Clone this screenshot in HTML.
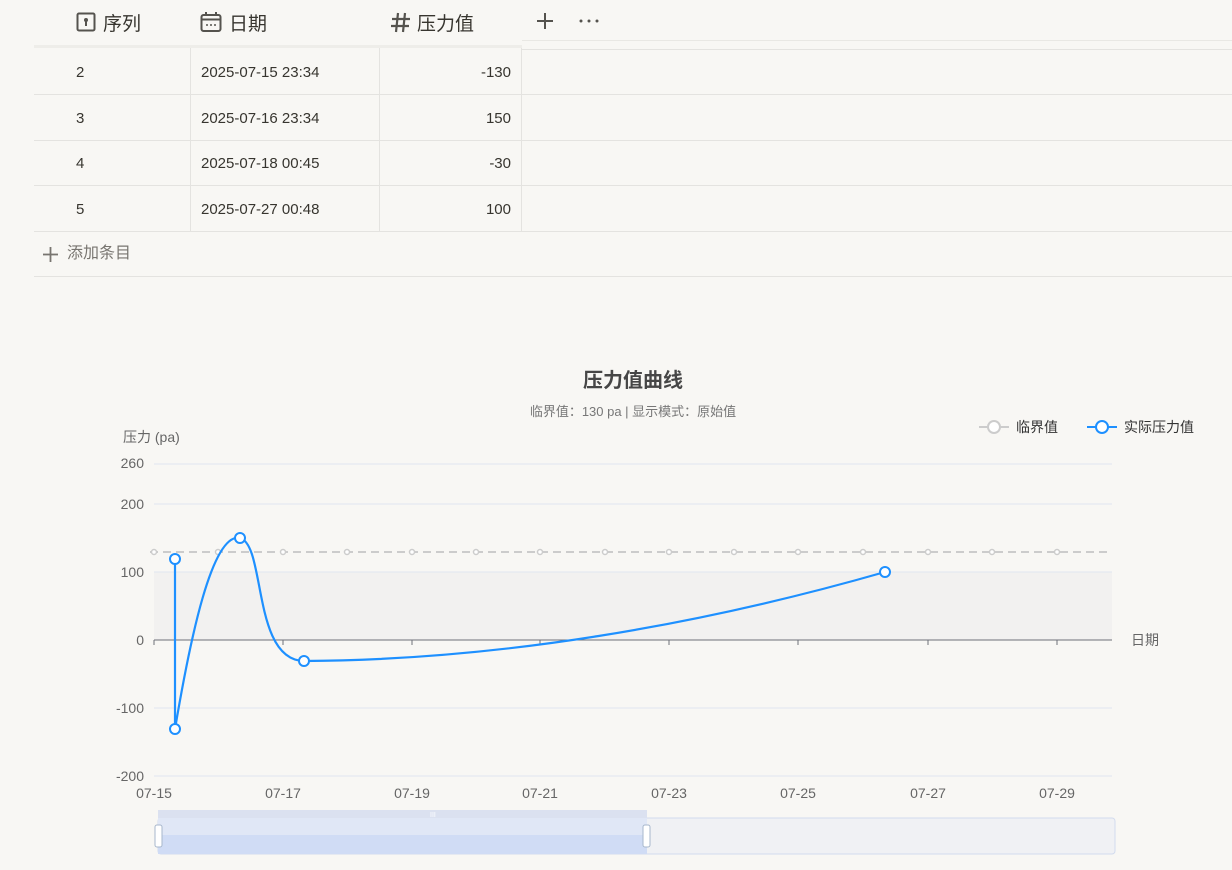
<!DOCTYPE html>
<html><head><meta charset="utf-8"><style>
body{margin:0;width:1232px;height:870px;background:#f8f7f4;font-family:"Liberation Sans","Noto Sans CJK SC",sans-serif;overflow:hidden;position:relative;color:#37352f}
.hd{position:absolute;top:0;height:44px;font-size:19px;display:flex;align-items:center}
.row{position:absolute;left:34px;width:1198px;height:45px;border-bottom:1px solid #e4e3e0;font-size:15px}
.c{position:absolute;top:1px;height:45px;line-height:45px}
.r{position:absolute;top:1px;height:45px;line-height:45px;right:721px}
.vl{position:absolute;top:48px;height:183px;width:1px;background:#e4e3e0}
</style></head><body>
<div class="hd" style="left:76px;top:0"><svg width="20" height="20" viewBox="0 0 20 20"><rect x="1.5" y="1.5" width="17" height="17" rx="1.5" fill="none" stroke="#55534e" stroke-width="2"/><circle cx="10" cy="8" r="2" fill="#55534e"/><rect x="9" y="8" width="2" height="6" fill="#55534e"/></svg><span style="margin-left:7px">序列</span></div>
<div class="hd" style="left:200px"><svg width="22" height="20" viewBox="0 0 22 20"><rect x="1.5" y="3" width="19" height="16" rx="2" fill="none" stroke="#55534e" stroke-width="2"/><line x1="1.5" y1="7.5" x2="20.5" y2="7.5" stroke="#55534e" stroke-width="2"/><line x1="6" y1="0" x2="6" y2="4" stroke="#55534e" stroke-width="2"/><line x1="16" y1="0" x2="16" y2="4" stroke="#55534e" stroke-width="2"/><circle cx="7" cy="13" r="1" fill="#55534e"/><circle cx="11" cy="13" r="1" fill="#55534e"/><circle cx="15" cy="13" r="1" fill="#55534e"/></svg><span style="margin-left:7px">日期</span></div>
<div class="hd" style="left:390px"><svg width="22" height="22" viewBox="0 0 22 22"><g stroke="#55534e" stroke-width="2.2"><line x1="8" y1="2" x2="6" y2="21"/><line x1="15" y1="2" x2="13" y2="21"/><line x1="2" y1="8" x2="20" y2="8"/><line x1="1" y1="15" x2="19" y2="15"/></g></svg><span style="margin-left:5px">压力值</span></div>
<svg style="position:absolute;left:536px;top:12px" width="18" height="18"><g stroke="#55534e" stroke-width="2"><line x1="9" y1="1" x2="9" y2="17"/><line x1="1" y1="9" x2="17" y2="9"/></g></svg>
<svg style="position:absolute;left:578px;top:18px" width="22" height="6"><g fill="#55534e"><circle cx="3" cy="3" r="1.5"/><circle cx="11" cy="3" r="1.5"/><circle cx="19" cy="3" r="1.5"/></g></svg>
<div style="position:absolute;left:34px;top:45px;width:488px;height:3px;background:#eeede9"></div>
<div style="position:absolute;left:522px;top:40px;width:710px;height:8px;border-top:1px solid #e9e8e4;border-bottom:1px solid #e4e3e0"></div>
<div class="vl" style="left:190px"></div><div class="vl" style="left:379px"></div><div class="vl" style="left:521px"></div>
<div class="row" style="top:49px"><div class="c" style="left:42px">2</div><div class="c" style="left:167px">2025-07-15 23:34</div><div class="r">-130</div></div>
<div class="row" style="top:95px"><div class="c" style="left:42px">3</div><div class="c" style="left:167px">2025-07-16 23:34</div><div class="r">150</div></div>
<div class="row" style="top:140px"><div class="c" style="left:42px">4</div><div class="c" style="left:167px">2025-07-18 00:45</div><div class="r">-30</div></div>
<div class="row" style="top:186px"><div class="c" style="left:42px">5</div><div class="c" style="left:167px">2025-07-27 00:48</div><div class="r">100</div></div>
<div class="row" style="top:232px;height:44px;color:#787570;font-size:16px"><svg style="position:absolute;left:9px;top:15px" width="15" height="15"><g stroke="#787570" stroke-width="1.8"><line x1="7.5" y1="0" x2="7.5" y2="15"/><line x1="0" y1="7.5" x2="15" y2="7.5"/></g></svg><div class="c" style="left:33px;line-height:44px;top:0">添加条目</div></div>
<svg style="position:absolute;left:0;top:0" width="1232" height="870" font-family="Liberation Sans, Noto Sans CJK SC, sans-serif">
<text x="633" y="387" text-anchor="middle" font-size="20" font-weight="bold" fill="#464646">压力值曲线</text>
<text x="633" y="416" text-anchor="middle" font-size="13" fill="#777">临界值：130 pa | 显示模式：原始值</text>
<line x1="979" y1="427" x2="1009" y2="427" stroke="#ccc" stroke-width="2"/><circle cx="994" cy="427" r="6" fill="#fff" stroke="#ccc" stroke-width="2"/>
<text x="1016" y="432" font-size="14" fill="#333">临界值</text>
<line x1="1087" y1="427" x2="1117" y2="427" stroke="#1e90ff" stroke-width="2"/><circle cx="1102" cy="427" r="6" fill="#fff" stroke="#1e90ff" stroke-width="2"/>
<text x="1124" y="432" font-size="14" fill="#333">实际压力值</text>
<text x="123" y="442" font-size="14" fill="#666">压力 (pa)</text>
<rect x="154" y="572" width="958" height="68" fill="#f2f1f0"/>
<g stroke="#e0e6f1" stroke-width="1"><line x1="154" y1="464" x2="1112" y2="464"/><line x1="154" y1="504" x2="1112" y2="504"/><line x1="154" y1="572" x2="1112" y2="572"/><line x1="154" y1="708" x2="1112" y2="708"/><line x1="154" y1="776" x2="1112" y2="776"/></g>
<g font-size="14" fill="#666" text-anchor="end"><text x="144" y="468">260</text><text x="144" y="509">200</text><text x="144" y="577">100</text><text x="144" y="645">0</text><text x="144" y="713">-100</text><text x="144" y="781">-200</text></g>
<line x1="154" y1="640" x2="1112" y2="640" stroke="#6e7079" stroke-width="1"/>
<g stroke="#6e7079"><line x1="154" y1="640" x2="154" y2="645"/><line x1="283" y1="640" x2="283" y2="645"/><line x1="412" y1="640" x2="412" y2="645"/><line x1="540" y1="640" x2="540" y2="645"/><line x1="669" y1="640" x2="669" y2="645"/><line x1="798" y1="640" x2="798" y2="645"/><line x1="928" y1="640" x2="928" y2="645"/><line x1="1057" y1="640" x2="1057" y2="645"/></g>
<text x="1131" y="645" font-size="14" fill="#666">日期</text>
<g font-size="14" fill="#666" text-anchor="middle"><text x="154" y="798">07-15</text><text x="283" y="798">07-17</text><text x="412" y="798">07-19</text><text x="540" y="798">07-21</text><text x="669" y="798">07-23</text><text x="798" y="798">07-25</text><text x="928" y="798">07-27</text><text x="1057" y="798">07-29</text></g>
<line x1="150" y1="552" x2="1112" y2="552" stroke="#ccc" stroke-width="2" stroke-dasharray="8,5"/>
<g fill="#fff" stroke="#ccc" stroke-width="1.5"><circle cx="154" cy="552" r="2.5"/><circle cx="218" cy="552" r="2.5"/><circle cx="283" cy="552" r="2.5"/><circle cx="347" cy="552" r="2.5"/><circle cx="412" cy="552" r="2.5"/><circle cx="476" cy="552" r="2.5"/><circle cx="540" cy="552" r="2.5"/><circle cx="605" cy="552" r="2.5"/><circle cx="669" cy="552" r="2.5"/><circle cx="734" cy="552" r="2.5"/><circle cx="798" cy="552" r="2.5"/><circle cx="863" cy="552" r="2.5"/><circle cx="928" cy="552" r="2.5"/><circle cx="992" cy="552" r="2.5"/><circle cx="1057" cy="552" r="2.5"/></g>
<path d="M175 559 L175 729 C190 640 212 532 240 538 C266 545 252 660 304 661 C500 660 700 625 885 572" fill="none" stroke="#1e90ff" stroke-width="2.2"/>
<g fill="#fff" stroke="#1e90ff" stroke-width="2"><circle cx="175" cy="559" r="5"/><circle cx="175" cy="729" r="5"/><circle cx="240" cy="538" r="5"/><circle cx="304" cy="661" r="5"/><circle cx="885" cy="572" r="5"/></g>
<rect x="158" y="818" width="957" height="36" rx="3" fill="#f0f1f4" stroke="#d2dbee"/>
<rect x="158" y="810" width="489" height="8" fill="#dbe1f0"/>
<rect x="158" y="818" width="489" height="36" fill="#d0dcf5"/>
<rect x="158" y="818" width="489" height="17" fill="#e0e7f6"/>
<text x="430" y="817" font-size="7" fill="#fff">III</text>
<rect x="155" y="825" width="7" height="22" rx="2" fill="#fff" stroke="#a7b7cc"/>
<rect x="643" y="825" width="7" height="22" rx="2" fill="#fff" stroke="#a7b7cc"/>
</svg>
</body></html>
